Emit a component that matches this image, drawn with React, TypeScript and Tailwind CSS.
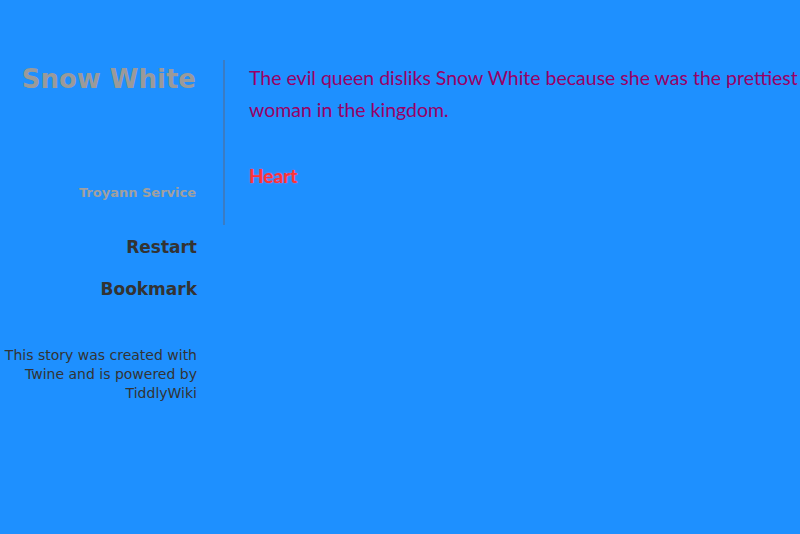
import React from 'react'

const sidebarFont = { fontFamily: '"DejaVu Sans", Verdana, sans-serif' }

function Sidebar() {
  return (
    <div className="w-[225px] shrink-0 text-right" style={sidebarFont}>
      {/* Title block with divider */}
      <div className="mt-[60px] h-[165px] border-r-2 border-[#3a7cc4] pr-[27px] flex flex-col">
        <h1 className="text-[26px] font-bold leading-[38px] text-[#9a9a9a]">Snow White</h1>
        <p className="mt-auto mb-[23px] text-[13px] font-bold text-[#a0a0a0]">Troyann Service</p>
      </div>
      <div className="pr-[28px]">
        <p className="mt-[10px] text-[17px] font-bold leading-[24px] text-[#333]">Restart</p>
        <p className="mt-[18px] text-[17px] font-bold leading-[24px] text-[#333]">Bookmark</p>
        <p className="mt-[45px] text-[14px] leading-[19px] text-[#333]">
          This story was created with Twine and is powered by TiddlyWiki
        </p>
      </div>
    </div>
  )
}

function Passage() {
  return (
    <div className="pl-[24px] pt-[62px]" style={{ fontFamily: 'Lato, "Open Sans", sans-serif' }}>
      <p className="text-[19.5px] leading-[32px] text-[#990066]">
        The evil queen disliks Snow White because she was the prettiest woman in the kingdom.
      </p>
      <a
        className="mt-[34px] inline-block text-[19px] font-bold leading-[32px] text-[#ff3333]"
        style={{ textShadow: '0 0 2px #ff66cc' }}
      >
        Heart
      </a>
    </div>
  )
}

export default function App() {
  return (
    <div className="min-h-[534px] w-[800px] bg-[#1e90ff] flex overflow-hidden">
      <Sidebar />
      <Passage />
    </div>
  )
}
